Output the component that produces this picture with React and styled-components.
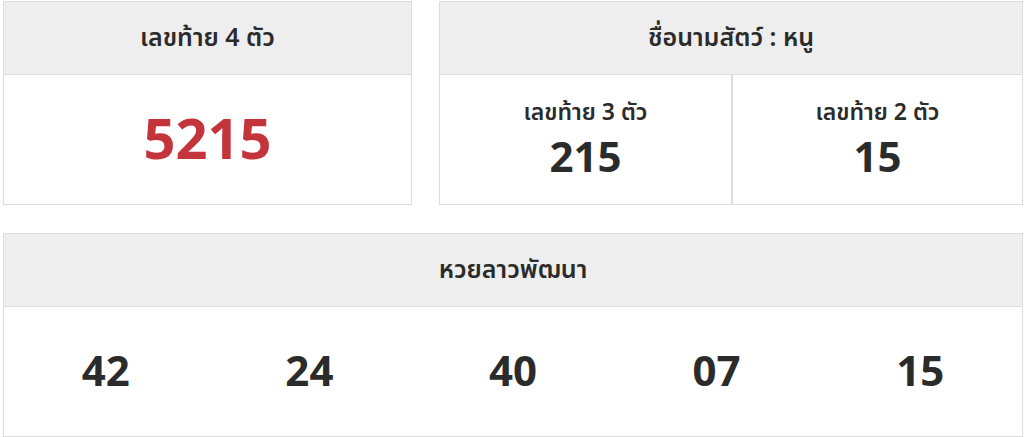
import styled, { createGlobalStyle } from 'styled-components'

const Global = createGlobalStyle`
  body {
    margin: 0;
    background: #fff;
    font-family: "Noto Sans", "Noto Sans Thai", "Noto Sans Thai UI", sans-serif;
    color: #2b2b2b;
  }
`

const Page = styled.div`
  padding: 1px 1px 0 3px;
  display: flex;
  flex-direction: column;
  gap: 28px;
  width: 1020px;
`

const TopRow = styled.div`
  display: grid;
  grid-template-columns: 409px 1fr;
  gap: 27px;
`

const Card = styled.div`
  border: 1px solid #dcdcdc;
  display: flex;
  flex-direction: column;
  height: 204px;
  box-sizing: border-box;
`

const Header = styled.div`
  height: 72px;
  flex: none;
  background: #eeeeee;
  border-bottom: 1px solid #dcdcdc;
  display: flex;
  align-items: center;
  justify-content: center;
  font-size: 25px;
  font-weight: 600;
  color: #2b2b2b;
`

const Body = styled.div`
  flex: 1;
  display: flex;
  align-items: center;
  justify-content: center;
`

const Big = styled.div`
  font-size: 56px;
  font-weight: 700;
  color: ${(p) => p.$color || '#2b2b2b'};
  line-height: 1;
  padding-bottom: 6px;
`

const Split = styled.div`
  flex: 1;
  display: grid;
  grid-template-columns: 1fr 1fr;
`

const Cell = styled.div`
  display: flex;
  flex-direction: column;
  align-items: center;
  justify-content: center;
  gap: 10px;
  padding-bottom: 4px;
  & + & {
    border-left: 2px solid #dcdcdc;
  }
`

const Label = styled.div`
  font-size: 23px;
  font-weight: 600;
  line-height: 1.2;
`

const Num = styled.div`
  font-size: 42px;
  font-weight: 700;
  line-height: 1;
`

const Row = styled.div`
  flex: 1;
  display: grid;
  grid-template-columns: repeat(5, 1fr);
  align-items: center;
  justify-items: center;
  padding-bottom: 4px;
`

const lao = ['42', '24', '40', '07', '15']

export default function App() {
  return (
    <>
      <Global />
      <Page>
        <TopRow>
          <Card>
            <Header>เลขท้าย 4 ตัว</Header>
            <Body>
              <Big $color="#c4343b">5215</Big>
            </Body>
          </Card>
          <Card>
            <Header>ชื่อนามสัตว์ : หนู</Header>
            <Split>
              <Cell>
                <Label>เลขท้าย 3 ตัว</Label>
                <Num>215</Num>
              </Cell>
              <Cell>
                <Label>เลขท้าย 2 ตัว</Label>
                <Num>15</Num>
              </Cell>
            </Split>
          </Card>
        </TopRow>
        <Card>
          <Header>หวยลาวพัฒนา</Header>
          <Row>
            {lao.map((n, i) => (
              <Num key={i}>{n}</Num>
            ))}
          </Row>
        </Card>
      </Page>
    </>
  )
}
